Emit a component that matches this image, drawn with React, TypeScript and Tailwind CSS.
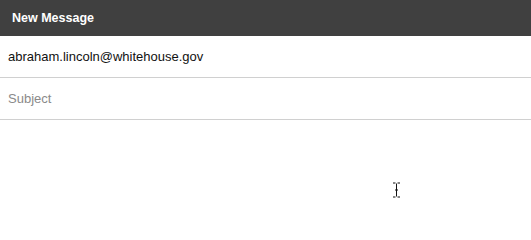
import React from "react";

export default function App() {
  return (
    <div className="relative w-[531px] h-[201px] bg-white overflow-hidden" style={{ fontFamily: '"Liberation Sans", Arial, sans-serif' }}>
      <div className="h-[36px] bg-[#404040] flex items-center px-[12px]">
        <span className="text-white text-[12.5px] font-bold">New Message</span>
      </div>
      <div className="h-[42px] border-b border-[#d0d0d0] flex items-center px-[8px]">
        <span className="text-[13px] text-[#111]">abraham.lincoln@whitehouse.gov</span>
      </div>
      <div className="h-[42px] border-b border-[#d0d0d0] flex items-center px-[8px]">
        <span className="text-[13px] text-[#8a8a8a]">Subject</span>
      </div>
      <svg className="absolute left-[392px] top-[182px]" width="9" height="16" viewBox="0 0 9 16">
        <path d="M1 1h2.5M5.5 1H8M4.5 1.5v13M1 15h2.5M5.5 15H8M3 8h3" stroke="#111" strokeWidth="1" fill="none" />
      </svg>
    </div>
  );
}
